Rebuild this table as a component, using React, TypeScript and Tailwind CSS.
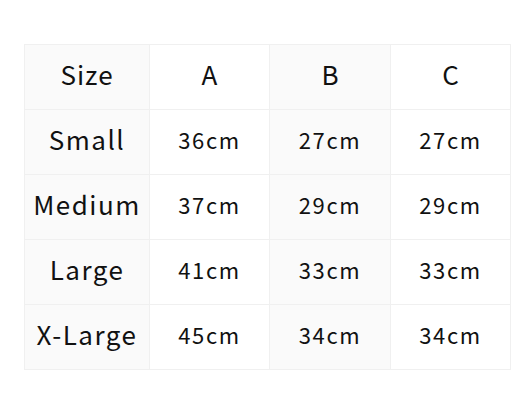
const columns = ["A", "B", "C"];

const rows = [
  { size: "Small", values: ["36cm", "27cm", "27cm"] },
  { size: "Medium", values: ["37cm", "29cm", "29cm"] },
  { size: "Large", values: ["41cm", "33cm", "33cm"] },
  { size: "X-Large", values: ["45cm", "34cm", "34cm"] },
];

const font = { fontFamily: '"Noto Sans CJK JP", "Noto Sans", sans-serif' };

export default function App() {
  return (
    <div className="w-[532px] h-[414px] bg-white pt-[44px] pl-[24px]" style={font}>
      <table className="table-fixed border-collapse w-[486px] text-[#111]">
        <colgroup>
          <col className="w-[125px]" />
          <col className="w-[120px]" />
          <col className="w-[121px]" />
          <col className="w-[120px]" />
        </colgroup>
        <thead>
          <tr className="h-[65px]">
            <th className="border border-[#f0f0f0] bg-[#fafafa] pb-[7px] text-[26px] font-normal tracking-[1px]">
              Size
            </th>
            {columns.map((c, i) => (
              <th
                key={c}
                className={`border border-[#f0f0f0] pb-[7px] text-[26px] font-normal ${i === 1 ? "bg-[#fafafa]" : "bg-white"}`}
              >
                {c}
              </th>
            ))}
          </tr>
        </thead>
        <tbody>
          {rows.map((r) => (
            <tr key={r.size} className="h-[65px]">
              <td className="border border-[#f0f0f0] bg-[#fafafa] pb-[7px] text-center text-[26px] tracking-[1.5px]">
                {r.size}
              </td>
              {r.values.map((v, i) => (
                <td
                  key={i}
                  className={`border border-[#f0f0f0] pb-[5px] text-center text-[22px] tracking-[1.6px] ${i === 1 ? "bg-[#fafafa]" : "bg-white"}`}
                >
                  {v}
                </td>
              ))}
            </tr>
          ))}
        </tbody>
      </table>
    </div>
  );
}
